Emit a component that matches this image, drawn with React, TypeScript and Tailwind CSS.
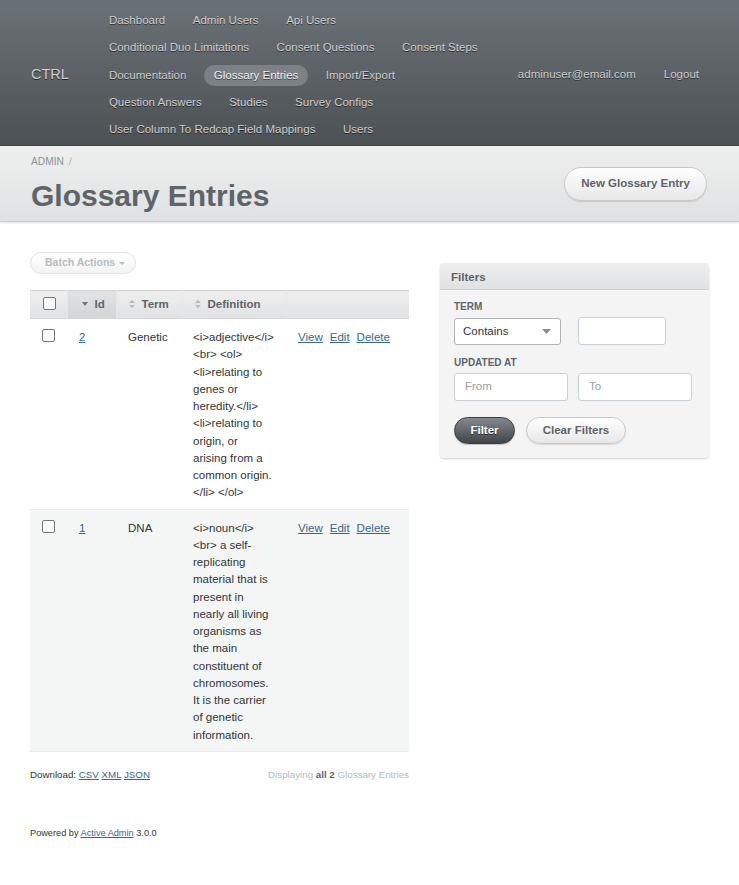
import React from "react";

const FONT = { fontFamily: '"Liberation Sans", Arial, sans-serif' };

const TABS = [
  "Dashboard",
  "Admin Users",
  "Api Users",
  "Conditional Duo Limitations",
  "Consent Questions",
  "Consent Steps",
  "Documentation",
  "Glossary Entries",
  "Import/Export",
  "Question Answers",
  "Studies",
  "Survey Configs",
  "User Column To Redcap Field Mappings",
  "Users",
];

const ROWS = [
  {
    id: "2",
    term: "Genetic",
    lines: [
      "<i>adjective</i>",
      "<br> <ol>",
      "<li>relating to",
      "genes or",
      "heredity.</li>",
      "<li>relating to",
      "origin, or",
      "arising from a",
      "common origin.",
      "</li> </ol>",
    ],
  },
  {
    id: "1",
    term: "DNA",
    lines: [
      "<i>noun</i>",
      "<br> a self-",
      "replicating",
      "material that is",
      "present in",
      "nearly all living",
      "organisms as",
      "the main",
      "constituent of",
      "chromosomes.",
      "It is the carrier",
      "of genetic",
      "information.",
    ],
  },
];

function Checkbox() {
  return (
    <span className="inline-block w-[13px] h-[13px] rounded-[2px] border border-[#767676] bg-white" />
  );
}

function SortBoth() {
  return (
    <svg width="6" height="8" viewBox="0 0 6 8" className="inline-block mr-[7px] -mt-[1px] align-middle">
      <path d="M0 3 L3 0 L6 3 Z" fill="#b3b9bd" />
      <path d="M0 5 L3 8 L6 5 Z" fill="#b3b9bd" />
    </svg>
  );
}

function Header() {
  return (
    <header className="flex h-[146px] pl-[31px] pr-[30px] pt-[10px] pb-[6px] bg-gradient-to-b from-[#6b7277] to-[#4c5155] border-b border-[#3c4043]">
      <div className="self-center mr-[30px] text-[14.5px] text-[#cdcdcd] [text-shadow:0_1px_0_rgba(0,0,0,0.6)]">
        CTRL
      </div>
      <nav className="flex flex-wrap content-start w-[410px] gap-x-[7.5px] gap-y-[6.25px]">
        {TABS.map((t) => (
          <a
            key={t}
            className={`h-[21px] leading-[21px] px-[10px] rounded-full whitespace-nowrap text-[#cdcdcd] [text-shadow:0_1px_0_rgba(0,0,0,0.55)] ${
              t === "Glossary Entries" ? "bg-[#7b8186] text-[#f0f0f0]" : ""
            }`}
          >
            {t}
          </a>
        ))}
      </nav>
      <div className="ml-auto self-center flex gap-[8px] text-[#cdcdcd] [text-shadow:0_1px_0_rgba(0,0,0,0.55)]">
        <a className="px-[10px] leading-[21px]">adminuser@email.com</a>
        <a className="px-[10px] leading-[21px]">Logout</a>
      </div>
    </header>
  );
}

function TitleBar() {
  return (
    <div className="flex h-[76px] px-[30px] bg-gradient-to-b from-[#efefef] to-[#dfe1e2] border-b border-[#cdcdcd] shadow-[0_1px_2px_rgba(0,0,0,0.12)]">
      <div className="pt-[9px] pl-[1px]">
        <div className="h-[14px] leading-[14px] text-[10.2px] text-[#8a949e]">
          ADMIN <span className="ml-[2px] text-[#aab1b7]">/</span>
        </div>
        <h2 className="mt-[12px] text-[30px] leading-[30px] font-bold text-[#5e6469]">
          Glossary Entries
        </h2>
      </div>
      <div className="ml-auto self-center">
        <a className="flex items-center h-[34px] px-[16px] mr-[2px] mt-[1px] rounded-full border border-[#c8c8c8] bg-gradient-to-b from-white to-[#e7e7e7] shadow-[0_1px_1px_rgba(0,0,0,0.12),inset_0_1px_0_#fff] font-bold text-[#5e6469]">
          New Glossary Entry
        </a>
      </div>
    </div>
  );
}

function IndexTable() {
  const th =
    "h-[28px] px-[12px] text-left font-bold text-[#5e6469] border-r border-[#e4e6e7] bg-gradient-to-b from-[#efefef] to-[#dfe1e2] whitespace-nowrap";
  return (
    <table className="w-[379px] table-fixed border-collapse">
      <colgroup>
        <col className="w-[37px]" />
        <col className="w-[49px]" />
        <col className="w-[66px]" />
        <col className="w-[104px]" />
        <col className="w-[123px]" />
      </colgroup>
      <thead>
        <tr className="border-y border-[#d4d4d4]">
          <th className="h-[28px] pl-[13px] text-left align-middle border-r border-[#e4e6e7] bg-gradient-to-b from-[#efefef] to-[#dfe1e2]">
            <span className="flex -mt-[3px]">
              <Checkbox />
            </span>
          </th>
          <th className="h-[28px] pl-[14px] pr-0 text-left font-bold text-[#5e6469] border-r border-[#e4e6e7] bg-gradient-to-b from-[#e2e3e4] to-[#d2d4d5] whitespace-nowrap">
            <svg width="6" height="4" viewBox="0 0 6 4" className="inline-block mr-[7px] align-middle -mt-[1px]">
              <path d="M0 0 L6 0 L3 4 Z" fill="#6f7579" />
            </svg>
            Id
          </th>
          <th className={th}>
            <SortBoth />
            Term
          </th>
          <th className={th}>
            <SortBoth />
            Definition
          </th>
          <th className="h-[28px] bg-gradient-to-b from-[#efefef] to-[#dfe1e2]" />
        </tr>
      </thead>
      <tbody>
        {ROWS.map((r, i) => (
          <tr
            key={r.id}
            className={`align-top border-b border-[#e8e9ea] ${i % 2 === 1 ? "bg-[#f4f5f5]" : "bg-white"}`}
          >
            <td className="pt-[10px] pb-[7px] pl-[12px]">
              <span className="flex">
                <Checkbox />
              </span>
            </td>
            <td className="pt-[10px] pb-[7px] px-[12px] leading-[17.25px]">
              <a className="text-[#38678b] underline">{r.id}</a>
            </td>
            <td className="pt-[10px] pb-[7px] px-[12px] leading-[17.25px] text-[#323537]">{r.term}</td>
            <td className="pt-[10px] pb-[7px] pl-[11px] pr-0 leading-[17.25px] text-[#323537]">
              {r.lines.map((l, j) => (
                <div key={j} className="whitespace-nowrap">
                  {l}
                </div>
              ))}
            </td>
            <td className="pt-[10px] pb-[7px] px-[12px] leading-[17.25px] whitespace-nowrap">
              <a className="text-[#38678b] underline">View</a>
              <a className="ml-[7px] text-[#38678b] underline">Edit</a>
              <a className="ml-[7px] text-[#38678b] underline">Delete</a>
            </td>
          </tr>
        ))}
      </tbody>
    </table>
  );
}

function Filters() {
  const label = "text-[10px] leading-[12px] font-bold uppercase text-[#5e6469]";
  const input =
    "h-[28px] rounded-[3px] border border-[#c9d0d6] bg-white px-[10px] flex items-center text-[#9aa0a4]";
  return (
    <div className="self-start mt-[11px] ml-[1px] w-[269px] rounded-[4px] bg-[#f4f4f4] shadow-[0_1px_2px_rgba(0,0,0,0.18)]">
      <h3 className="h-[27px] leading-[29px] px-[11px] rounded-t-[4px] bg-gradient-to-b from-[#efefef] to-[#dfe1e2] border-b border-[#cdcdcd] font-bold text-[#5e6469]">
        Filters
      </h3>
      <div className="px-[14px] pt-[11px] pb-[14px]">
        <div className={label}>Term</div>
        <div className="flex items-start gap-[17px] mt-[4px]">
          <div className="w-[107px] h-[27px] mt-[1px] rounded-[3px] border border-[#aeb4b8] bg-white flex items-center justify-between pl-[8px] pr-[9px] text-[#323537]">
            <span>Contains</span>
            <svg width="9" height="5" viewBox="0 0 9 5">
              <path d="M0 0 L9 0 L4.5 5 Z" fill="#888e92" />
            </svg>
          </div>
          <div className="w-[88px] h-[28px] rounded-[3px] border border-[#c9d0d6] bg-white" />
        </div>
        <div className={`${label} mt-[12px]`}>Updated At</div>
        <div className="flex gap-[10px] mt-[4px]">
          <div className={`${input} w-[114px]`}>From</div>
          <div className={`${input} w-[114px]`}>To</div>
        </div>
        <div className="flex gap-[11px] mt-[16px]">
          <button className="h-[27px] w-[61px] rounded-full border border-[#3a3d40] bg-gradient-to-b from-[#838a90] to-[#414549] font-bold text-white [text-shadow:0_1px_0_rgba(0,0,0,0.6)] shadow-[0_1px_1px_rgba(0,0,0,0.2)]">
            Filter
          </button>
          <button className="h-[27px] w-[100px] rounded-full border border-[#c8c8c8] bg-gradient-to-b from-white to-[#e7e7e7] font-bold text-[#5e6469] shadow-[0_1px_1px_rgba(0,0,0,0.1)]">
            Clear Filters
          </button>
        </div>
      </div>
    </div>
  );
}

export default function App() {
  return (
    <div className="min-h-[885px] bg-white text-[11.52px] leading-[17.28px] text-[#323537]" style={FONT}>
      <Header />
      <TitleBar />

      <div className="flex gap-[30px] px-[30px] pt-[30px]">
        {/* Main column */}
        <div className="w-[379px]">
          <button className="flex items-center h-[22px] w-[106px] pl-[14px] rounded-full border border-[#e3e3e3] bg-gradient-to-b from-white to-[#f3f3f3] text-[10.5px] font-bold text-[#b7bdc1]">
            Batch Actions
            <svg width="6" height="3" viewBox="0 0 6 3" className="ml-[4px]">
              <path d="M0 0 L6 0 L3 3 Z" fill="#b7bdc1" />
            </svg>
          </button>
          <div className="mt-[16px]">
            <IndexTable />
          </div>
          <div className="flex justify-between mt-[15px] text-[9.75px] leading-[15px]">
            <div className="text-[#323537]">
              Download: <a className="text-[#38678b] underline">CSV</a>{" "}
              <a className="text-[#38678b] underline">XML</a>{" "}
              <a className="text-[#38678b] underline">JSON</a>
            </div>
            <div className="text-[#b3bcc1]">
              Displaying <b className="text-[#5e6469]">all 2</b> Glossary Entries
            </div>
          </div>
        </div>

        {/* Sidebar */}
        <Filters />
      </div>

      <div className="px-[30px] mt-[44px] text-[9.2px] leading-[15px] text-[#323537]">
        Powered by <a className="text-[#38678b] underline">Active Admin</a> 3.0.0
      </div>
    </div>
  );
}
